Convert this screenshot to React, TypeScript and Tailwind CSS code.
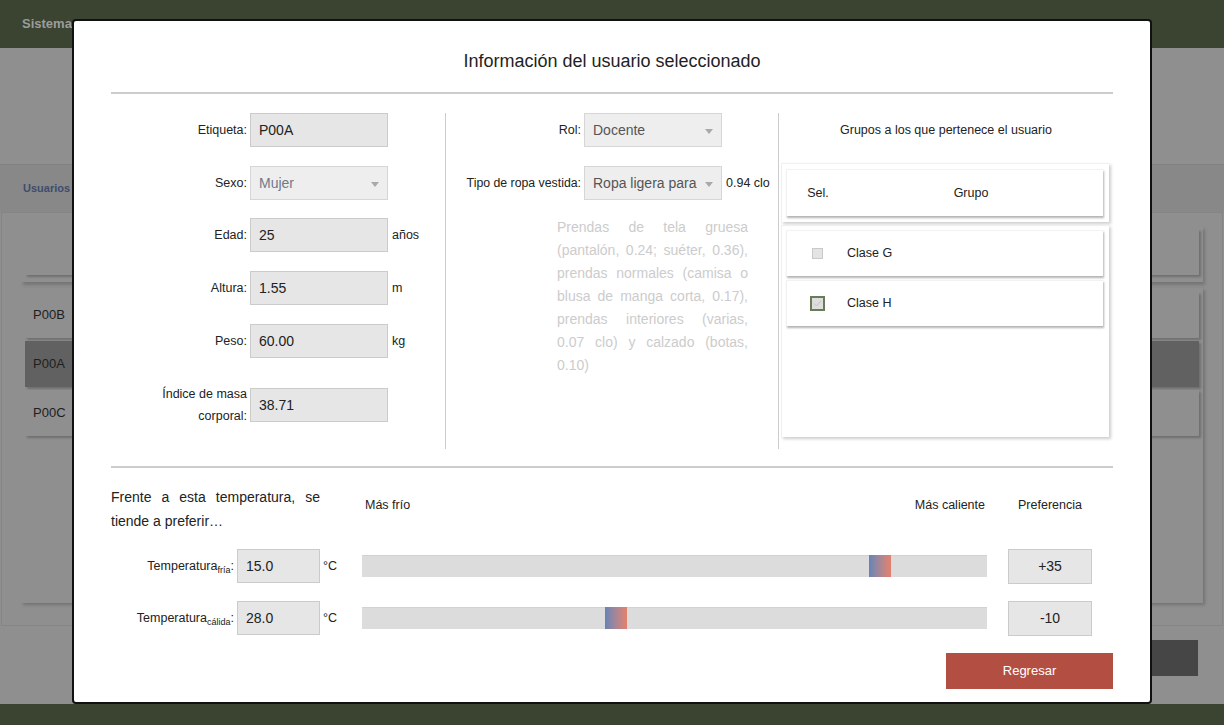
import React from "react";

function Field({ value, w = "w-[138px]" }: { value: string; w?: string }) {
  return (
    <div className={`${w} h-[34px] shrink-0 bg-[#e6e6e6] border border-[#cbcbcb] flex items-center pl-[8px] text-[14px] text-[#222]`}>
      {value}
    </div>
  );
}

function SelectBox({ value, muted }: { value: string; muted?: boolean }) {
  return (
    <div className="relative w-[138px] h-[34px] shrink-0 bg-[#eeeeee] border border-[#d6d6d6] flex items-center pl-[8px] text-[14px]">
      <span className={muted ? "text-[#707988] whitespace-nowrap overflow-hidden" : "text-[#555555] whitespace-nowrap overflow-hidden pr-[22px]"}>{value}</span>
      <span className="absolute right-[8px] top-[15px] w-0 h-0 border-l-[4px] border-r-[4px] border-t-[5px] border-l-transparent border-r-transparent border-t-[#a9a9a9]" />
    </div>
  );
}

function Row({ label, children, mt }: { label: React.ReactNode; children: React.ReactNode; mt: string }) {
  return (
    <div className={`flex items-center ${mt}`}>
      <div className="w-[136px] text-right text-[12.5px] text-[#222] leading-[22px]">{label}</div>
      <div className="ml-[3px]">{children}</div>
    </div>
  );
}

function BgRow({ text, dark }: { text?: string; dark?: boolean }) {
  return (
    <div
      className={`h-[46px] mx-[4px] flex items-center pl-[8px] text-[13px] text-[#1e1e1e] shadow-[2px_2px_2px_rgba(0,0,0,0.22)] ${dark ? "bg-[#616161]" : "bg-[#8f8f8f]"}`}
    >
      {text}
    </div>
  );
}

function Slider({ left }: { left: number }) {
  return (
    <div className="relative w-[625px] h-[22px] shrink-0 bg-[#dcdcdc] border-t border-[#d2d2d2]">
      <div
        className="absolute top-[-1px] w-[22px] h-[22px] bg-gradient-to-r from-[#6383b6] to-[#e5806c]"
        style={{ left: `${left}px` }}
      />
    </div>
  );
}

export default function App() {
  return (
    <div className="relative w-[1224px] h-[725px] overflow-hidden bg-[#8f8f8f] font-['Liberation_Sans',Arial,sans-serif]">
      {/* Background page */}
      <div className="h-[48px] bg-[#3a4430] flex items-center pl-[22px] text-[13px] font-bold text-[#9c9c9c]">
        Sistema de confort térmico
      </div>
      <div className="h-[116px]" />
      <div className="h-[48px] bg-[#888888] border-t border-[#828282] flex items-center pl-[23px] text-[11px] font-bold text-[#3e4d6d]">
        Usuarios
      </div>
      <div className="mx-[1px] h-[414px] border border-[#858585] pt-[13px] px-[19px]">
        <div className="h-[56px] pt-[3px] shadow-[2px_3px_3px_rgba(0,0,0,0.18)]">
          <BgRow />
        </div>
        <div className="mt-[6px] h-[315px] pt-[4px] flex flex-col gap-[3px] shadow-[2px_2px_3px_rgba(0,0,0,0.2)]">
          <BgRow text="P00B" />
          <BgRow text="P00A" dark />
          <BgRow text="P00C" />
        </div>
      </div>
      <div className="h-[78px] flex justify-end pt-[14px] pr-[26px]">
        <div className="w-[140px] h-[36px] bg-[#464646]" />
      </div>
      <div className="h-[21px] bg-[#3a4430]" />

      {/* Modal */}
      <div className="absolute left-[72px] top-[19px] w-[1080px] h-[685px] bg-white border-2 border-[#111] rounded-[4px] px-[37px] text-[#222]">
        <div className="h-[71px] pt-[30px] text-center text-[18px] leading-[21px] text-[#1f1f1f]">
          Información del usuario seleccionado
        </div>
        <div className="h-[2px] bg-[#cccccc]" />

        <div className="mt-[19px] h-[336px] flex">
          {/* Left column */}
          <div className="w-[335px] border-r border-[#cccccc] flex flex-col">
            <Row label="Etiqueta:" mt="mt-0">
              <Field value="P00A" />
            </Row>
            <Row label="Sexo:" mt="mt-[19px]">
              <SelectBox value="Mujer" muted />
            </Row>
            <Row label="Edad:" mt="mt-[18px]">
              <div className="flex items-center">
                <Field value="25" />
                <span className="ml-[4px] text-[12.5px]">años</span>
              </div>
            </Row>
            <Row label="Altura:" mt="mt-[19px]">
              <div className="flex items-center">
                <Field value="1.55" />
                <span className="ml-[4px] text-[12.5px]">m</span>
              </div>
            </Row>
            <Row label="Peso:" mt="mt-[19px]">
              <div className="flex items-center">
                <Field value="60.00" />
                <span className="ml-[4px] text-[12.5px]">kg</span>
              </div>
            </Row>
            <Row
              label={
                <>
                  Índice de masa
                  <br />
                  corporal:
                </>
              }
              mt="mt-[25px]"
            >
              <Field value="38.71" />
            </Row>
          </div>

          {/* Middle column */}
          <div className="w-[333px] border-r border-[#cccccc] flex flex-col">
            <div className="flex items-center">
              <div className="w-[135px] text-right text-[12.5px]">Rol:</div>
              <div className="ml-[3px]">
                <SelectBox value="Docente" />
              </div>
            </div>
            <div className="flex items-center mt-[19px]">
              <div className="w-[135px] text-right text-[12.3px] whitespace-nowrap">Tipo de ropa vestida:</div>
              <div className="ml-[3px]">
                <SelectBox value="Ropa ligera para" />
              </div>
              <span className="ml-[4px] text-[12.5px] whitespace-nowrap">0.94 clo</span>
            </div>
            <p className="mt-[16px] ml-[111px] w-[191px] text-justify text-[14px] leading-[23px] text-[#cccccc]">
              Prendas de tela gruesa (pantalón, 0.24; suéter, 0.36), prendas normales (camisa o blusa de manga corta, 0.17), prendas interiores (varias, 0.07 clo) y calzado (botas, 0.10)
            </p>
          </div>

          {/* Right column */}
          <div className="w-[334px] flex flex-col">
            <div className="h-[34px] flex items-center justify-center text-[12.5px]">
              Grupos a los que pertenece el usuario
            </div>
            <div className="mt-[16px] ml-[2px] w-[328px] h-[59px] pt-[5px] pl-[4px] border-t border-l border-[#f0f0f0] shadow-[2px_2px_3px_rgba(0,0,0,0.2)]">
              <div className="w-[317px] h-[47px] flex items-center text-[12.5px] border-t border-l border-[#f2f2f2] shadow-[1px_2px_2px_rgba(0,0,0,0.3)]">
                <div className="w-[62px] text-center">Sel.</div>
                <div className="flex-1 text-center pr-[10px]">Grupo</div>
              </div>
            </div>
            <div className="mt-[3px] ml-[2px] w-[328px] h-[212px] pt-[4px] pl-[4px] flex flex-col gap-[4px] border-t border-l border-[#f0f0f0] shadow-[2px_2px_3px_rgba(0,0,0,0.2)]">
              <div className="w-[317px] h-[46px] shrink-0 flex items-center text-[12.5px] border-t border-l border-[#f2f2f2] shadow-[1px_2px_2px_rgba(0,0,0,0.3)]">
                <div className="w-[60px] flex justify-center">
                  <div className="w-[11px] h-[11px] bg-[#e4e4e4] border border-[#c9c9c9]" />
                </div>
                <span>Clase G</span>
              </div>
              <div className="w-[317px] h-[46px] shrink-0 flex items-center text-[12.5px] border-t border-l border-[#f2f2f2] shadow-[1px_2px_2px_rgba(0,0,0,0.3)]">
                <div className="w-[60px] flex justify-center">
                  <div className="w-[15px] h-[15px] bg-[#dedede] border-2 border-[#687c58] flex items-center justify-center">
                    <svg width="9" height="7" viewBox="0 0 9 7">
                      <path d="M1 3.5 L3.5 6 L8 1" fill="none" stroke="#c4c4c4" strokeWidth="1" />
                    </svg>
                  </div>
                </div>
                <span>Clase H</span>
              </div>
            </div>
          </div>
        </div>

        <div className="mt-[17px] h-[2px] bg-[#cccccc]" />

        {/* Temperature section */}
        <div className="mt-[17px] flex items-start">
          <p className="w-[209px] text-justify text-[14px] leading-[24px]">
            Frente a esta temperatura, se tiende a preferir…
          </p>
          <div className="ml-[42px] mt-[12px] w-[625px] flex justify-between pl-[3px] pr-[2px] text-[12.5px] leading-[16px]">
            <span>Más frío</span>
            <span>Más caliente</span>
          </div>
          <div className="ml-[21px] mt-[12px] w-[84px] text-center text-[12.5px] leading-[16px]">Preferencia</div>
        </div>

        <div className="mt-[15px] h-[36px] flex items-center">
          <div className="w-[123px] text-right text-[12.5px] whitespace-nowrap">
            Temperatura<span className="text-[9px] relative top-[3px]">fría</span>:
          </div>
          <div className="ml-[3px]">
            <Field value="15.0" w="w-[83px]" />
          </div>
          <div className="ml-[3px] w-[39px] text-[12.5px]">°C</div>
          <Slider left={507} />
          <div className="ml-[21px] w-[84px] h-[35px] bg-[#e6e6e6] border border-[#cbcbcb] flex items-center justify-center text-[14px]">
            +35
          </div>
        </div>

        <div className="mt-[16px] h-[36px] flex items-center">
          <div className="w-[123px] text-right text-[12.5px] whitespace-nowrap">
            Temperatura<span className="text-[9px] relative top-[3px]">cálida</span>:
          </div>
          <div className="ml-[3px]">
            <Field value="28.0" w="w-[83px]" />
          </div>
          <div className="ml-[3px] w-[39px] text-[12.5px]">°C</div>
          <Slider left={243} />
          <div className="ml-[21px] w-[84px] h-[35px] bg-[#e6e6e6] border border-[#cbcbcb] flex items-center justify-center text-[14px]">
            -10
          </div>
        </div>

        <div className="mt-[17px] flex justify-end">
          <button className="w-[167px] h-[36px] bg-[#b34f42] text-white text-[13px]">Regresar</button>
        </div>
      </div>
    </div>
  );
}
